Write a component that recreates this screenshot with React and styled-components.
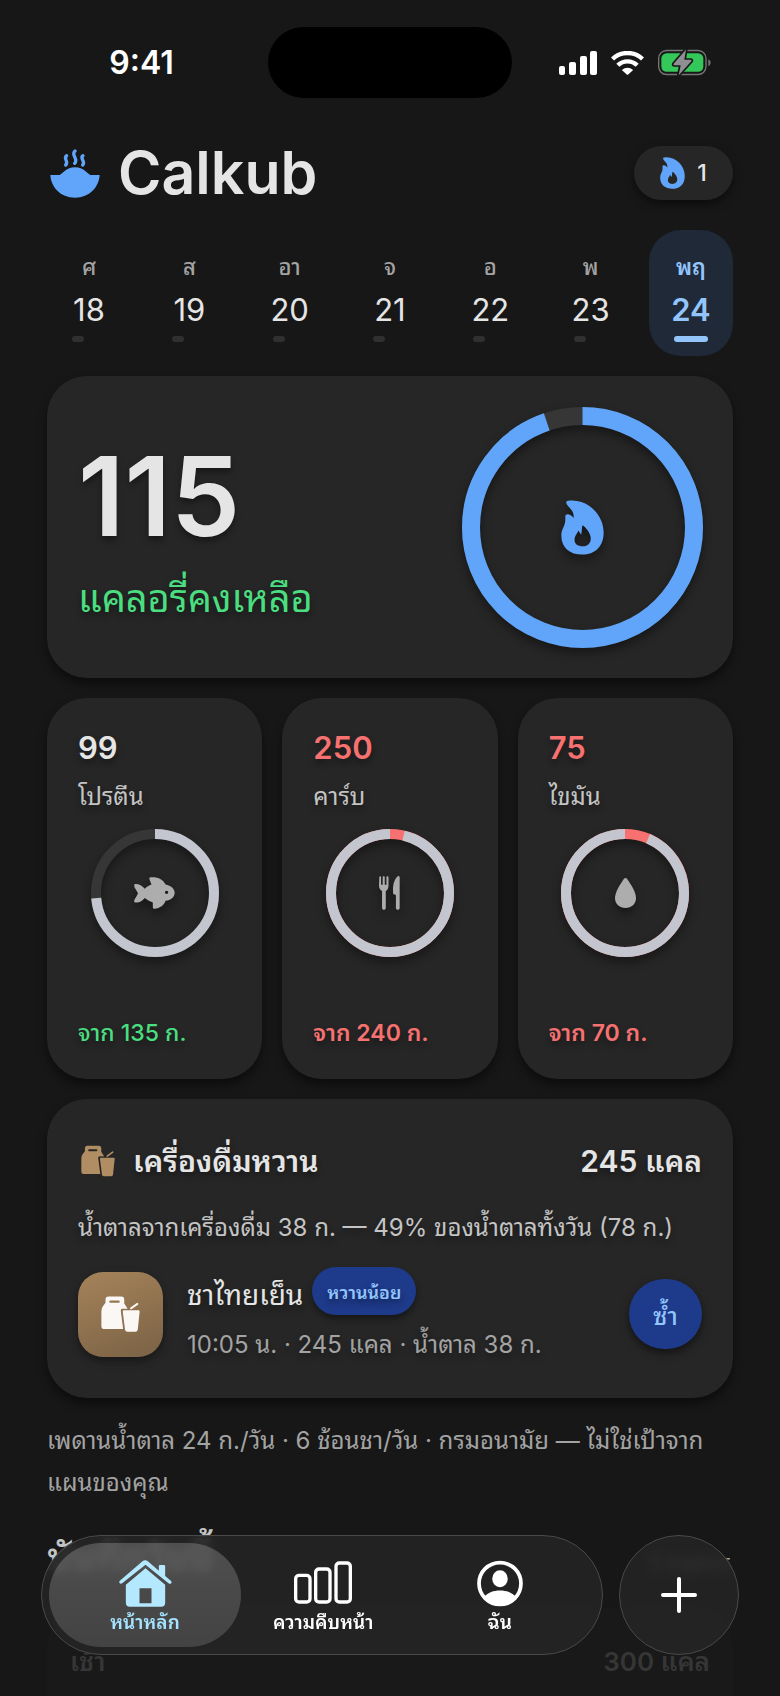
import React from 'react';
import styled, { createGlobalStyle, css } from 'styled-components';

/* COLORS */
const colors = {
    page: '#171717',
    card: '#262626',
    text: '#e5e5e5',
    soft: '#c4c4c4',
    muted: '#a3a3a3',
    blue: '#60a5fa',
    lightBlue: '#93c5fd',
    navy: '#1e3a8a',
    green: '#4ade80',
    red: '#f87171',
    ring: '#c3c6ce',
    track: '#363636',
    brown: '#b08d62',
};

const GlobalStyle = createGlobalStyle`
    * { box-sizing: border-box; }
    body {
        margin: 0;
        background: ${colors.page};
        color: ${colors.text};
        font-family: Inter, "Noto Sans Thai Looped", "Noto Sans Thai", "Noto Sans", sans-serif;
    }
    h1, h2, h3, p, ul { margin: 0; padding: 0; }
    ul { list-style: none; }
    button { font: inherit; color: inherit; border: 0; padding: 0; cursor: pointer; }
    a { color: inherit; text-decoration: none; }
    svg { display: block; flex: none; }
`;

const softShadow = css`
    text-shadow: 0 4px 6px rgba(0, 0, 0, 0.4);
`;

const Screen = styled.div`
    height: 100vh;
    overflow: hidden;
    padding: 27px 47px 0;
`;

/* STATUS BAR */
const StatusBar = styled.div`
    display: grid;
    grid-template-columns: 1fr 244px 1fr;
    align-items: center;
    height: 71px;
`;
const Clock = styled.time`
    justify-self: center;
    padding-right: 32px;
    color: #fff;
    font-size: 32px;
    font-weight: 600;
    line-height: 40px;
`;
const Island = styled.div`
    height: 71px;
    border-radius: 36px;
    background: #000;
`;
const StatusIcons = styled.div`
    display: flex;
    align-items: center;
    justify-content: flex-end;
    gap: 14px;
    padding-right: 22px;
`;

/* HEADER */
const Header = styled.header`
    display: flex;
    align-items: center;
    height: 54px;
    margin-top: 48px;
`;
const Logo = styled.h1`
    display: flex;
    align-items: center;
    gap: 18px;
    padding-left: 3px;
    font-size: 59px;
    font-weight: 600;
    line-height: 60px;
`;
const Streak = styled.button`
    display: flex;
    align-items: center;
    justify-content: center;
    gap: 12px;
    width: 99px;
    height: 54px;
    margin-left: auto;
    border-radius: 27px;
    background: ${colors.card};
    box-shadow: 0 4px 8px rgba(0, 0, 0, 0.5);
    font-size: 23px;
    font-weight: 500;
`;

/* WEEK */
const Week = styled.ul`
    display: flex;
    justify-content: space-between;
    margin-top: 30px;
`;
const Day = styled.button`
    display: flex;
    flex-direction: column;
    align-items: center;
    width: 84px;
    height: 126px;
    padding-top: 21px;
    border-radius: 32px;
    background: ${({ $active }) => ($active ? '#1f2937' : 'transparent')};
    color: ${({ $active }) => ($active ? colors.lightBlue : colors.text)};
`;
const DayName = styled.span`
    color: ${({ $active }) => ($active ? colors.lightBlue : colors.muted)};
    font-size: 22px;
    font-weight: ${({ $active }) => ($active ? 600 : 500)};
    line-height: 32px;
`;
const DayNumber = styled.span`
    font-size: 31px;
    font-weight: ${({ $active }) => ($active ? 600 : 400)};
    line-height: 53px;
`;
const DayBar = styled.span`
    width: 34px;
    height: 6px;

    &::before {
        content: '';
        display: block;
        width: ${({ $active }) => ($active ? '34px' : '12px')};
        height: 6px;
        border-radius: 3px;
        background: ${({ $active }) => ($active ? colors.lightBlue : '#303030')};
    }
`;

/* CARDS */
const Card = styled.section`
    border-radius: 40px;
    background: ${colors.card};
    box-shadow: 0 6px 10px rgba(0, 0, 0, 0.45);
`;
const CaloriesCard = styled(Card)`
    display: flex;
    align-items: center;
    justify-content: space-between;
    height: 302px;
    margin-top: 20px;
    padding: 0 30px 0 31px;
`;
const CaloriesInfo = styled.div`
    padding-top: 20px;
`;
const CaloriesNumber = styled.p`
    font-size: 110px;
    font-weight: 600;
    line-height: 112px;
    ${softShadow}
`;
const CaloriesLabel = styled.h2`
    padding-top: 10px;
    color: ${colors.green};
    font-size: 38px;
    font-weight: 400;
    line-height: 72px;
    ${softShadow}
`;
const RingBox = styled.div`
    display: grid;
    place-items: center;
    filter: drop-shadow(0 5px 5px rgba(0, 0, 0, 0.4));

    > * { grid-area: 1 / 1; }
`;

const Macros = styled.div`
    display: grid;
    grid-template-columns: repeat(3, 1fr);
    gap: 20px;
    margin: 20px 0;
`;
const MacroCard = styled(Card)`
    display: flex;
    flex-direction: column;
    height: 381px;
    padding: 30px 31px 29px;
    ${softShadow}

    ${RingBox} { margin-top: 11px; }
`;
const MacroValue = styled.p`
    color: ${({ $over }) => ($over ? colors.red : colors.text)};
    font-size: 31px;
    font-weight: 600;
    line-height: 40px;
`;
const MacroName = styled.h3`
    margin-top: 8px;
    color: ${colors.soft};
    font-size: 24px;
    font-weight: 400;
    line-height: 42px;
`;
const MacroGoal = styled.p`
    margin-top: auto;
    color: ${({ $over }) => ($over ? colors.red : colors.green)};
    font-size: 23px;
    font-weight: ${({ $over }) => ($over ? 600 : 500)};
    line-height: 34px;
    white-space: nowrap;
`;

/* DRINKS */
const DrinksCard = styled(Card)`
    height: 299px;
    padding: 37px 31px 0;
    ${softShadow}
`;
const DrinksHeader = styled.div`
    display: flex;
    align-items: center;
    gap: 18px;
    padding-left: 3px;
    font-size: 30px;
    font-weight: 600;
    line-height: 50px;
`;
const DrinksTitle = styled.h2`
    flex: 1;
    font-size: 30px;
    font-weight: 600;
`;
const DrinksText = styled.p`
    margin-top: 24px;
    color: ${colors.soft};
    font-size: 24px;
    line-height: 36px;
    white-space: nowrap;
`;
const DrinkRow = styled.div`
    display: flex;
    align-items: center;
    margin-top: 19px;
`;
const DrinkTile = styled.div`
    display: grid;
    place-items: center;
    width: 85px;
    height: 85px;
    border-radius: 25px;
    background: linear-gradient(160deg, #a5835a, #7a6245);
    box-shadow: 0 4px 8px rgba(0, 0, 0, 0.4);
`;
const DrinkInfo = styled.div`
    flex: 1;
    padding-top: 2px;
    padding-left: 24px;
`;
const DrinkName = styled.h3`
    display: flex;
    align-items: flex-end;
    gap: 9px;
    font-size: 28px;
    font-weight: 400;
    line-height: 40px;
`;
const Tag = styled.span`
    padding: 4px 15px 0;
    border-radius: 24px;
    background: ${colors.navy};
    box-shadow: 0 4px 6px rgba(0, 0, 0, 0.4);
    color: ${colors.lightBlue};
    font-size: 18px;
    font-weight: 600;
    line-height: 44px;
`;
const DrinkMeta = styled.p`
    margin-top: 12px;
    color: ${colors.muted};
    font-size: 24px;
    line-height: 36px;
`;
const RepeatButton = styled.button`
    width: 73px;
    height: 70px;
    border-radius: 35px;
    background: ${colors.navy};
    box-shadow: 0 4px 8px rgba(0, 0, 0, 0.5);
    color: ${colors.lightBlue};
    font-size: 24px;
    font-weight: 500;
`;

const Note = styled.p`
    margin-top: 22px;
    color: ${colors.muted};
    font-size: 24px;
    line-height: 42px;
`;

/* LOG */
const LogHeader = styled.div`
    display: flex;
    align-items: baseline;
    justify-content: space-between;
    margin-top: 23px;
    padding-right: 2px;
    line-height: 60px;
`;
const LogTitle = styled.h2`
    color: ${colors.soft};
    font-size: 38px;
    font-weight: 600;
`;
const LogCount = styled.span`
    color: ${colors.muted};
    font-size: 22px;
`;
const MealCard = styled.section`
    display: flex;
    justify-content: space-between;
    margin-top: 15px;
    padding: 32px 23px 60px;
    border-radius: 40px;
    background: #191919;
    color: #363636;
    font-size: 26px;
    font-weight: 600;
    line-height: 44px;
`;

/* BOTTOM NAVIGATION */
const Dock = styled.div`
    position: fixed;
    right: 41px;
    bottom: 41px;
    left: 41px;
    display: flex;
    gap: 16px;
    height: 120px;
`;
const glass = css`
    border: 1px solid #4a4a4a;
    background: rgba(36, 36, 36, 0.88);
    backdrop-filter: blur(5px);
`;
const Nav = styled.nav`
    display: flex;
    flex: 1;
    padding: 7px 14px 7px 7px;
    border-radius: 60px;
    ${glass}
`;
const activeTab = css`
    flex: 0 0 192px;
    margin-right: -6px;
    background: linear-gradient(rgba(255, 255, 255, 0.2), rgba(255, 255, 255, 0.15));
    color: #a5e3ff;
`;
const Tab = styled.a`
    display: flex;
    flex: 1;
    flex-direction: column;
    align-items: center;
    justify-content: flex-end;
    padding-bottom: 8px;
    border-radius: 52px;
    color: #fff;
    font-size: 19px;
    font-weight: 600;
    line-height: 32px;
    ${({ $active }) => $active && activeTab}
`;
const AddButton = styled.button`
    display: grid;
    place-items: center;
    width: 120px;
    border-radius: 60px;
    ${glass}
`;

/* ICONS */
const SignalIcon = () => (
    <svg width="38" height="24" viewBox="0 0 38 24" fill="#fff">
        <rect x="0" y="15" width="6" height="9" rx="2" />
        <rect x="10" y="11" width="7" height="13" rx="2" />
        <rect x="21" y="5" width="7" height="19" rx="2" />
        <rect x="31" y="0" width="7" height="24" rx="2" />
    </svg>
);

const WifiIcon = () => (
    <svg width="33" height="24" viewBox="0 0 98 72">
        <g fill="none" stroke="#fff" strokeWidth="13">
            <path d="M4 24 C28 0 70 0 94 24" />
            <path d="M20 43 C36 27 62 27 78 43" />
        </g>
        <path d="M32 57 Q49 44 66 57 L52 70 Q49 73 46 70 Z" fill="#fff" />
    </svg>
);

const BatteryIcon = () => (
    <svg width="53" height="27" viewBox="0 0 159 80">
        <rect x="2" y="4" width="142" height="72" rx="24" fill="none" stroke="#757575" strokeWidth="4" />
        <path d="M151 30 Q158 33 158 40 Q158 47 151 51 Z" fill="#757575" />
        <rect x="10" y="12" width="126" height="56" rx="16" fill="#34c759" />
        <path
            d="M84 1 L47 44 Q45 48 49 48 H68 L62 78 L100 36 Q102 32 98 32 H79 Z"
            fill="#8e8e93"
            stroke={colors.page}
            strokeWidth="10"
            paintOrder="stroke"
            strokeLinejoin="round"
        />
    </svg>
);

const BowlIcon = () => (
    <svg width="50" height="49" viewBox="0 0 150 147">
        <g fill="none" stroke={colors.blue} strokeWidth="10" strokeLinecap="round">
            <path d="M50 20 C38 29 58 37 47 48" />
            <path d="M75 6 C61 18 87 29 74 43" />
            <path d="M99 20 C87 29 109 37 98 48" />
        </g>
        <path
            d="M1 78 H29 C40 73 48 55 75 55 C102 55 110 73 121 78 H149 C147 114 119 146 75 146 C31 146 3 114 1 78 Z"
            fill={colors.blue}
        />
    </svg>
);

const FlameIcon = ({ width, height }) => (
    <svg width={width} height={height} viewBox="0 0 130 166">
        <path
            fillRule="evenodd"
            fill={colors.blue}
            d="M22 2 C76 -6 129 41 129 98 C129 140 103 165 64 165 C27 165 1 145 1 108 C1 83 15 82 13 51 C12 39 28 40 38 54 C41 31 23 24 17 12 C15 6 16 3 22 2 Z
               M65 76 C62 84 64 94 61 104 C58 101 56 98 53 92 C50 101 41 107 41 121 C41 133 51 140 65 140 C79 140 90 132 90 116 C90 101 76 83 65 76 Z"
        />
    </svg>
);

const FishIcon = () => (
    <svg width="41" height="32" viewBox="0 0 122 94">
        <path
            fillRule="evenodd"
            fill="#adadad"
            d="M3 20 C13 19 24 24 32 34 C38 29 45 24 52 22 L46 6 C45 2 47 0 51 0 C73 -1 87 7 94 22 C110 25 121 35 121 46 C121 59 109 69 94 70 C90 83 78 92 61 94 C57 94 56 92 56 88 V75 C46 72 39 67 32 62 C25 71 15 77 3 75 C-2 74 1 65 6 60 L12 48 L5 36 C0 29 -1 22 3 20 Z
               M97 40 A5 5 0 1 0 97 50 A5 5 0 1 0 97 40 Z"
        />
    </svg>
);

const UtensilsIcon = () => (
    <svg width="21" height="34" viewBox="0 0 62 100" fill="#adadad">
        <path d="M1 3 C1 0 6 0 6 3 V26 H11 V3 C11 0 17 0 17 3 V26 H22 V3 C22 0 28 0 28 3 V28 C28 37 25 42 20 44 V94 C20 101 9 101 9 94 V44 C4 42 0 37 0 28 Z" />
        <path d="M57 0 C60 0 61 2 61 4 V94 C61 101 50 101 50 94 V56 L42 53 C39 28 46 6 57 0 Z" />
    </svg>
);

const DropIcon = () => (
    <svg width="21" height="30" viewBox="0 0 62 88">
        <path d="M26 3 Q31 -3 36 3 C48 20 62 43 62 59 C62 77 49 88 31 88 C13 88 0 77 0 59 C0 43 14 20 26 3 Z" fill="#adadad" />
    </svg>
);

const TakeawayIcon = ({ width, height, color, cut }) => (
    <svg width={width} height={height} viewBox="0 0 104 96">
        <path
            fillRule="evenodd"
            fill={color}
            d="M12 9 Q12 1 20 1 H54 Q62 1 62 9 V20 L71 34 H57 Q52 34 53 41 L59 88 H7 Q1 88 1 80 V40 Q1 32 6 26 L12 18 Z
               M25 12 Q22 12 22 15 Q22 18 25 18 H47 Q50 18 50 15 Q50 12 47 12 Z"
        />
        <path d="M57 38 H102 L95 95 H65 Z" fill={cut} stroke={cut} strokeWidth="6" />
        <path d="M80 33 L97 21" fill="none" stroke={color} strokeWidth="5" strokeLinecap="round" />
        <path d="M60 38 H101 Q103 38 103 42 L98 89 Q97 95 91 95 H71 Q65 95 64 89 L58 42 Q58 38 60 38 Z" fill={color} />
    </svg>
);

const HomeIcon = () => (
    <svg width="53" height="47" viewBox="0 0 158 141">
        <path
            fill="#b3e8ff"
            d="M2 62 L70 4 Q78 -3 86 4 L119 32 V18 Q119 15 122 15 H134 Q138 15 138 18 V48 L155 62 Q159 66 156 70 Q153 73 148 70 L79 14 L9 70 Q4 73 1 69 Q-1 65 2 62 Z"
        />
        <path
            fillRule="evenodd"
            fill="#b3e8ff"
            d="M79 25 L138 74 V128 Q138 140 126 140 H32 Q20 140 20 128 V74 Z M61 85 V130 H97 V85 Z"
        />
    </svg>
);

const BarsIcon = () => (
    <svg width="58" height="47" viewBox="0 0 174 135" fill="none" stroke="#fff" strokeWidth="10">
        <rect x="5" y="43" width="43" height="80" rx="10" />
        <rect x="65" y="24" width="43" height="99" rx="10" />
        <rect x="126" y="6" width="43" height="117" rx="10" />
    </svg>
);

const ProfileIcon = () => (
    <svg width="46" height="47" viewBox="0 0 136 136">
        <circle cx="68" cy="68" r="62" fill="none" stroke="#fff" strokeWidth="11" />
        <ellipse cx="68" cy="54" rx="23" ry="25" fill="#fff" />
        <path d="M22 107 C32 95 49 89 68 89 C87 89 104 95 114 107 C102 122 87 130 68 130 C49 130 34 122 22 107 Z" fill="#fff" />
    </svg>
);

const PlusIcon = () => (
    <svg width="36" height="36" viewBox="0 0 36 36" stroke="#fff" strokeWidth="4" strokeLinecap="round">
        <path d="M18 2 V34 M2 18 H34" />
    </svg>
);

/* from / to: pedaço preenchido do anel, de 0 a 1 */
function Ring({ size, stroke, from = 0, to, color, children }) {
    const radius = (size - stroke) / 2;
    const arc = {
        cx: size / 2,
        cy: size / 2,
        r: radius,
        fill: 'none',
        strokeWidth: stroke,
        pathLength: 100,
    };

    return <RingBox>
        <svg width={size} height={size} viewBox={`0 0 ${size} ${size}`}>
            <g transform={`rotate(-90 ${size / 2} ${size / 2})`}>
                <circle {...arc} stroke={from ? colors.red : colors.track} />
                <circle
                    {...arc}
                    stroke={color}
                    strokeDasharray={`${(to - from) * 100} 100`}
                    strokeDashoffset={-from * 100}
                />
            </g>
        </svg>
        {children}
    </RingBox>;
}

const days = [
    { name: 'ศ', number: 18 },
    { name: 'ส', number: 19 },
    { name: 'อา', number: 20 },
    { name: 'จ', number: 21 },
    { name: 'อ', number: 22 },
    { name: 'พ', number: 23 },
    { name: 'พฤ', number: 24, active: true },
];

const macros = [
    { id: 'protein', value: 99, name: 'โปรตีน', goal: 'จาก 135 ก.', from: 0, to: 0.736, Icon: FishIcon },
    { id: 'carbs', value: 250, name: 'คาร์บ', goal: 'จาก 240 ก.', from: 0.037, to: 1, over: true, Icon: UtensilsIcon },
    { id: 'fat', value: 75, name: 'ไขมัน', goal: 'จาก 70 ก.', from: 0.064, to: 1, over: true, Icon: DropIcon },
];

const tabs = [
    { id: 'home', label: 'หน้าหลัก', Icon: HomeIcon, active: true },
    { id: 'progress', label: 'ความคืบหน้า', Icon: BarsIcon },
    { id: 'me', label: 'ฉัน', Icon: ProfileIcon },
];

function App() {
    return <>
        <GlobalStyle />
        <Screen>
            <StatusBar>
                <Clock>9:41</Clock>
                <Island />
                <StatusIcons>
                    <SignalIcon />
                    <WifiIcon />
                    <BatteryIcon />
                </StatusIcons>
            </StatusBar>

            <Header>
                <Logo><BowlIcon />Calkub</Logo>
                <Streak><FlameIcon width={25} height={32} />1</Streak>
            </Header>

            <Week>
                {days.map(({ name, number, active }) => <li key={number}>
                    <Day $active={active}>
                        <DayName $active={active}>{name}</DayName>
                        <DayNumber $active={active}>{number}</DayNumber>
                        <DayBar $active={active} />
                    </Day>
                </li>)}
            </Week>

            <main>
                <CaloriesCard>
                    <CaloriesInfo>
                        <CaloriesNumber>115</CaloriesNumber>
                        <CaloriesLabel>แคลอรี่คงเหลือ</CaloriesLabel>
                    </CaloriesInfo>
                    <Ring size={241} stroke={18} to={0.948} color={colors.blue}>
                        <FlameIcon width={43} height={55} />
                    </Ring>
                </CaloriesCard>

                <Macros>
                    {macros.map(({ id, value, name, goal, from, to, over, Icon }) => <MacroCard key={id}>
                        <MacroValue $over={over}>{value}</MacroValue>
                        <MacroName>{name}</MacroName>
                        <Ring size={128} stroke={10} from={from} to={to} color={colors.ring}>
                            <Icon />
                        </Ring>
                        <MacroGoal $over={over}>{goal}</MacroGoal>
                    </MacroCard>)}
                </Macros>

                <DrinksCard>
                    <DrinksHeader>
                        <TakeawayIcon width={34} height={32} color={colors.brown} cut={colors.card} />
                        <DrinksTitle>เครื่องดื่มหวาน</DrinksTitle>
                        <span>245 แคล</span>
                    </DrinksHeader>
                    <DrinksText>น้ำตาลจากเครื่องดื่ม 38 ก. — 49% ของน้ำตาลทั้งวัน (78 ก.)</DrinksText>
                    <DrinkRow>
                        <DrinkTile>
                            <TakeawayIcon width={39} height={36} color="#faf7f5" cut="#8f7250" />
                        </DrinkTile>
                        <DrinkInfo>
                            <DrinkName>ชาไทยเย็น <Tag>หวานน้อย</Tag></DrinkName>
                            <DrinkMeta>10:05 น. · 245 แคล · น้ำตาล 38 ก.</DrinkMeta>
                        </DrinkInfo>
                        <RepeatButton>ซ้ำ</RepeatButton>
                    </DrinkRow>
                </DrinksCard>

                <Note>เพดานน้ำตาล 24 ก./วัน · 6 ช้อนชา/วัน · กรมอนามัย — ไม่ใช่เป้าจากแผนของคุณ</Note>

                <LogHeader>
                    <LogTitle>บันทึกวันนี้</LogTitle>
                    <LogCount>1 รายการ</LogCount>
                </LogHeader>
                <MealCard>
                    <span>เช้า</span>
                    <span>300 แคล</span>
                </MealCard>
            </main>

            <Dock>
                <Nav>
                    {tabs.map(({ id, label, Icon, active }) => <Tab key={id} href={`#${id}`} $active={active}>
                        <Icon />
                        {label}
                    </Tab>)}
                </Nav>
                <AddButton aria-label="เพิ่ม"><PlusIcon /></AddButton>
            </Dock>
        </Screen>
    </>;
}

export default App;
